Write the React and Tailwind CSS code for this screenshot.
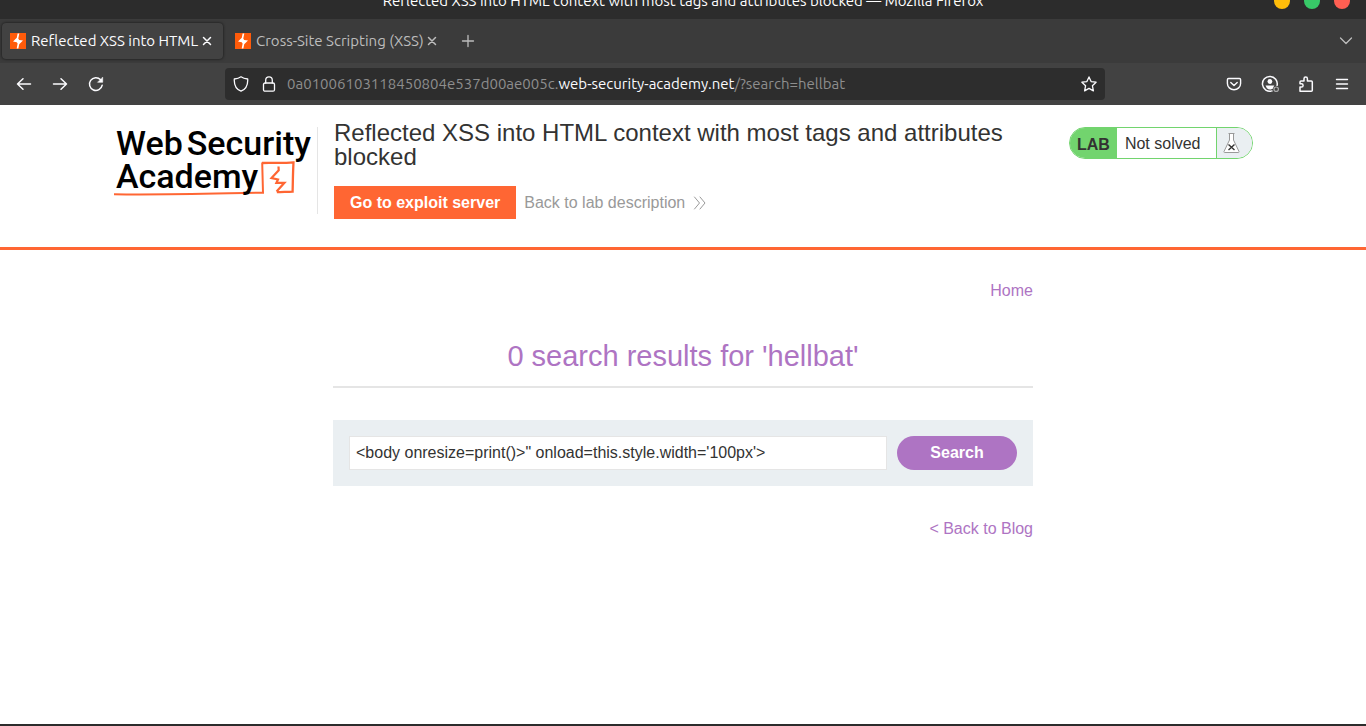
import React from 'react';

const chromeFont = "font-['Ubuntu','Noto_Sans',sans-serif]";

function Icon({ children, className = 'size-4', viewBox = '0 0 16 16', strokeWidth = 1.3 }) {
  return (
    <svg
      className={className}
      viewBox={viewBox}
      fill="none"
      stroke="currentColor"
      strokeWidth={strokeWidth}
      strokeLinecap="round"
      strokeLinejoin="round"
      aria-hidden="true"
    >
      {children}
    </svg>
  );
}

function Favicon() {
  return (
    <svg className="size-4 shrink-0" viewBox="0 0 16 16" aria-hidden="true">
      <rect width="16" height="16" fill="#ff5b0a" />
      <path d="M9.300 .6 8.300 5.600 9.200 6.900 13 7.500 9.200 11.200 8.400 15.400H6.700L7.600 10.500 6.700 9.200 3 8.500 6.800 4.800 7.600 .6z" fill="#fff" />
    </svg>
  );
}

function TitleBar() {
  return (
    <div className="flex h-[19px] flex-col justify-end overflow-hidden bg-[#2c2c2c]">
      <div className="grid h-9 shrink-0 grid-cols-[1fr_auto_1fr] items-center">
        <span />
        <span className="text-[15px] leading-5 text-white">
          Reflected XSS into HTML context with most tags and attributes blocked — Mozilla Firefox
        </span>
        <div className="flex justify-end gap-3.5 pr-4">
          <button type="button" aria-label="Minimize" className="size-4 rounded-full bg-[#ffbd0a]" />
          <button type="button" aria-label="Maximize" className="size-4 rounded-full bg-[#38c968]" />
          <button type="button" aria-label="Close window" className="size-4 rounded-full bg-[#ff5f52]" />
        </div>
      </div>
    </div>
  );
}

function Tab({ title, active }) {
  return (
    <div
      className={
        active
          ? 'flex h-9 w-[221px] items-center rounded bg-[#424242] px-2 text-[#fbfbfe] shadow-[0_0_3px_rgba(0,0,0,0.7)]'
          : 'flex h-9 w-[221px] items-center rounded px-2 text-[#bdbdbd]'
      }
    >
      <Favicon />
      <button
        type="button"
        role="tab"
        aria-selected={active}
        className="ml-[5px] w-[170px] overflow-hidden text-left text-[15px] leading-6 whitespace-nowrap"
      >
        {title}
      </button>
      <button type="button" aria-label="Close tab" className="flex size-4 items-center justify-center">
        <Icon strokeWidth={1.5}>
          <path d="M4.5 4.5l7 7M11.5 4.5l-7 7" />
        </Icon>
      </button>
    </div>
  );
}

function TabStrip() {
  return (
    <div className="flex h-11 items-center gap-1 bg-[#3b3b3b] px-0.5 text-[#bdbdbd]">
      <div role="tablist" className="flex gap-1">
        <Tab title="Reflected XSS into HTML" active />
        <Tab title="Cross-Site Scripting (XSS)" active={false} />
      </div>
      <button type="button" aria-label="New tab" className="flex size-8 items-center justify-center">
        <Icon>
          <path d="M8 2.5v11M2.5 8h11" />
        </Icon>
      </button>
      <button type="button" aria-label="List all tabs" className="mr-0.5 ml-auto flex size-8 items-center justify-center">
        <Icon>
          <path d="M2.5 5l5.5 5.5L13.5 5" />
        </Icon>
      </button>
    </div>
  );
}

function ToolButton({ label, children }) {
  return (
    <button type="button" aria-label={label} className="flex size-8 items-center justify-center">
      {children}
    </button>
  );
}

function Toolbar() {
  return (
    <div className="flex h-[42px] items-center bg-[#424242] text-[#fbfbfe]">
      <div className="flex w-[225px] shrink-0 gap-1 pl-2">
        <ToolButton label="Back">
          <Icon strokeWidth={1.5}>
            <path d="M14.5 8H1.5M7 2.8L1.5 8 7 13.2" />
          </Icon>
        </ToolButton>
        <ToolButton label="Forward">
          <Icon strokeWidth={1.5}>
            <path d="M1.5 8h13M9 2.8L14.500 8 9 13.2" />
          </Icon>
        </ToolButton>
        <ToolButton label="Reload">
          <Icon strokeWidth={1.5}>
            <path d="M14.200 9.200A6.400 6.400 0 1 1 12.600 3.700" />
            <path d="M14.700 1.500v4.800H9.900z" fill="currentColor" strokeWidth="0.6" />
          </Icon>
        </ToolButton>
      </div>
      <div className="flex h-8 min-w-0 flex-1 items-center rounded bg-[#2d2d2d] px-2">
        <Icon>
          <path d="M8 .8c2 1.500 4.300 2 6.700 2.200.3 5.500-1.700 10.200-6.700 12.200C3 13.200 1 8.500 1.300 3 3.700 2.800 6 2.300 8 .8z" />
        </Icon>
        <Icon className="ml-3 size-4">
          <rect x="2.500" y="7" width="11" height="8.200" rx="1.500" />
          <path d="M4.700 7V4.200a3.300 3.300 0 0 1 6.600 0V7" />
        </Icon>
        <div
          role="textbox"
          aria-label="Address"
          tabIndex={0}
          className="ml-2.5 min-w-0 flex-1 overflow-hidden text-[15px] leading-6 whitespace-nowrap text-[#8e8e8e]"
        >
          0a01006103118450804e537d00ae005c.<span className="text-[#fbfbfe]">web-security-academy.net</span>
          /?search=hellbat
        </div>
        <button type="button" aria-label="Bookmark this page">
          <Icon>
            <path d="M8 .9l2.100 4.700 5 .6-3.700 3.500 1 5.200L8 12.400l-4.400 2.500 1-5.200L.9 6.200l5-.6z" />
          </Icon>
        </button>
      </div>
      <div className="flex w-[261px] shrink-0 justify-end gap-1 pr-2">
        <ToolButton label="Save to Pocket">
          <Icon strokeWidth={1.400}>
            <path d="M2.600 2.500h10.800c.7 0 1.200.5 1.200 1.200V7.500a6.600 6.200 0 0 1-13.200 0V3.700c0-.7.5-1.200 1.200-1.200z" />
            <path d="M4.800 6.400L8 9.400l3.200-3" />
          </Icon>
        </ToolButton>
        <ToolButton label="Account">
          <Icon className="size-[18px]" viewBox="0 0 18 18" strokeWidth={1.500}>
            <path d="M11 15.900A7.400 7.400 0 1 1 16.100 10.300" />
            <circle cx="8.900" cy="6.500" r="2.400" fill="currentColor" stroke="none" />
            <path d="M4.500 10.500h8.800l-1.400 2.800c-1.800 1.600-4.200 1.600-6 0z" fill="currentColor" stroke="none" />
            <circle cx="15.200" cy="14.200" r="2.200" stroke="#a8a8a8" strokeWidth="1.200" />
          </Icon>
        </ToolButton>
        <ToolButton label="Extensions">
          <Icon strokeWidth={1.500}>
            <path d="M2 15.200v-4.200h1.500a1.600 1.600 0 0 0 0-3.200H2V6c0-.6.4-1 1-1h3V2.700a1.600 1.600 0 0 1 3.400 0V5h3.900c.6 0 1 .4 1 1v8.200c0 .6-.4 1-1 1z" />
          </Icon>
        </ToolButton>
        <ToolButton label="Open application menu">
          <Icon strokeWidth={1.400}>
            <path d="M2.500 3.500h11M2.500 8h11M2.500 12.500h11" />
          </Icon>
        </ToolButton>
      </div>
    </div>
  );
}

function AcademyLogo() {
  return (
    <a
      href="#academy"
      aria-label="Web Security Academy"
      className="relative block h-[87px] w-[205px] shrink-0 border-r border-[#e5e5e5] pl-[3px] font-['Roboto',sans-serif] text-[34px] leading-[33px] font-medium text-black"
    >
      <svg className="absolute top-0 left-px h-[72px] w-[200px]" viewBox="0 0 200 72" fill="none" stroke="#ff6633" aria-hidden="true">
        <path d="M0 67.200c50 .8 100-.7 149-1.500l-.8-30.200" strokeWidth="2" />
        <path d="M148 36c10-.3 21 .4 31.500-.6-.6 10-.6 19-.9 29.200-5.500.4-10.500.2-15.800.6" strokeWidth="2.300" />
        <path d="M164.500 39.500l.2 3.800-7.200 7.700 6.500 1.500-1.600 3.300h8l-7.800 8.700" strokeWidth="2.200" />
      </svg>
      <span className="relative flex gap-1">
        <span>Web</span>
        <span>Security</span>
      </span>
      <span className="relative block">Academy</span>
    </a>
  );
}

function LabHeader() {
  return (
    <header className="border-b-[3px] border-[#ff6633] px-4 pb-7">
      <div className="mx-auto flex max-w-[1140px] items-start pt-[22px]">
        <AcademyLogo />
        <div className="-mt-1.5 ml-4 min-w-0 flex-1">
          <h2 className="max-w-[700px] text-2xl leading-6 text-[#333332]">
            Reflected XSS into HTML context with most tags and attributes blocked
          </h2>
          <div className="mt-[17px] flex items-center gap-2">
            <a href="#exploit" className="bg-[#ff6633] px-4 text-base leading-[33px] font-bold text-white">
              Go to exploit server
            </a>
            <a href="#description" className="flex items-center gap-2 text-base text-[#999]">
              Back to lab description
              <Icon className="h-[14px] w-[14px]" viewBox="0 0 14 14" strokeWidth={1}>
                <path d="M1.500 1l5 6-5 6M7 1l5 6-5 6" />
              </Icon>
            </a>
          </div>
        </div>
        <div className="flex h-8 w-[184px] shrink-0 items-stretch overflow-hidden rounded-full border border-[#72d46e] text-base text-[#333332]">
          <span className="bg-[#72d46e] px-[7px] leading-[33px] font-bold whitespace-nowrap">
            LAB
          </span>
          <span className="flex-1 border-r border-[#72d46e] pl-2 leading-[31px]">Not solved</span>
          <span className="flex w-[35px] items-center bg-[#eaeff2] pl-1.5">
            <svg className="h-[22px] w-[17px]" viewBox="0 0 17 22" fill="none" aria-hidden="true">
              <path d="M5.500 1.500h6M6.500 1.500v6.500L1 19.500c-.3.700 0 1 .6 1h13.800c.6 0 .9-.3.600-1L10.500 8V1.500" fill="#fff" stroke="#999" />
              <path d="M5.500 12.500l6 5.500M11.500 12.500l-6 5.500" stroke="#333332" strokeWidth="1.400" />
            </svg>
          </span>
        </div>
      </div>
    </header>
  );
}

function BlogSearch() {
  return (
    <main className="mx-auto w-full max-w-[700px] flex-1 text-base leading-6 text-[#ae74c3]">
      <nav className="mt-[29px] text-right">
        <a href="#home">Home</a>
      </nav>
      <h1 className="mt-[35px] border-b-2 border-[#e5e5e5] pb-3 text-center text-[29px] leading-9">
        0 search results for 'hellbat'
      </h1>
      <form className="mt-8 flex gap-2.5 bg-[#eaeff2] p-4" onSubmit={(e) => e.preventDefault()}>
        <input
          type="text"
          name="search"
          aria-label="Search the blog"
          defaultValue={`<body onresize=print()>" onload=this.style.width='100px'>`}
          className="h-[34px] min-w-0 flex-1 border border-[#e5e5e5] bg-white px-1.5 text-[#333332] outline-none"
        />
        <button type="submit" className="h-[34px] w-[120px] rounded-full bg-[#ae74c3] font-bold text-white">
          Search
        </button>
      </form>
      <p className="mt-[31px] text-right">
        <a href="#blog">&lt; Back to Blog</a>
      </p>
    </main>
  );
}

export default function App() {
  return (
    <div className="flex min-h-screen flex-col bg-white font-['Liberation_Sans',Arial,sans-serif]">
      <div className={chromeFont}>
        <TitleBar />
        <TabStrip />
        <Toolbar />
      </div>
      <LabHeader />
      <BlogSearch />
      <div className="h-0.5 bg-[#2c2c2c]" />
    </div>
  );
}
